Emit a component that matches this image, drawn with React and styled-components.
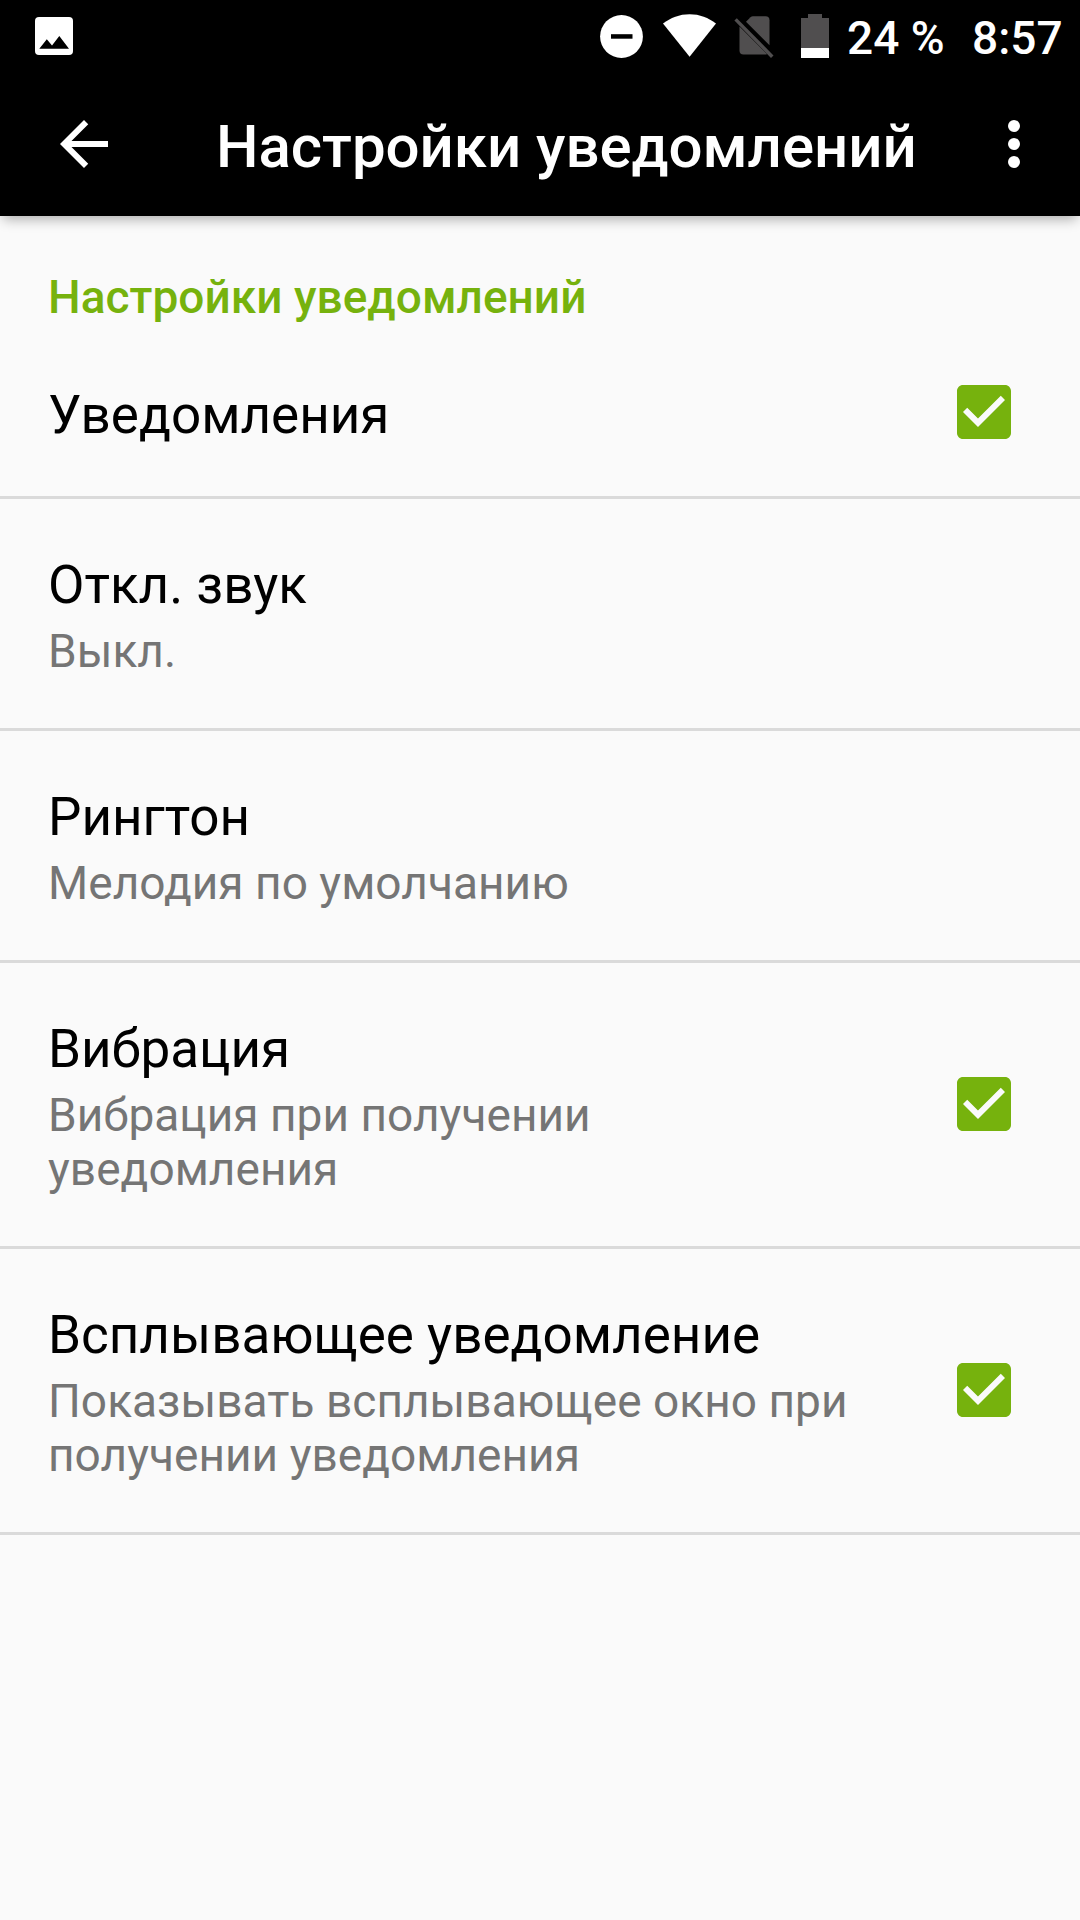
import React from "react";
import styled, { createGlobalStyle } from "styled-components";

const GlobalStyle = createGlobalStyle`
  body { margin: 0; background: #fafafa; }
  * { box-sizing: border-box; }
`;

const Screen = styled.div`
  width: 1080px;
  height: 1920px;
  display: flex;
  flex-direction: column;
  background: #fafafa;
  font-family: Roboto, "Noto Sans", sans-serif;
  overflow: hidden;
`;

const Header = styled.header`
  background: #000;
  color: #fff;
  box-shadow: 0 6px 12px -3px rgba(0, 0, 0, 0.32);
`;

const StatusBar = styled.div`
  height: 72px;
  display: flex;
  align-items: flex-start;
  justify-content: space-between;
  padding: 0 0 0 35px;
`;

const Glyph = styled.svg`
  display: block;
  flex: none;
  width: ${(p) => p.$w}px;
  height: ${(p) => p.$h}px;
  margin-top: ${(p) => p.$top || 0}px;
  margin-left: ${(p) => p.$left || 0}px;
`;

const StatusIcons = styled.div`
  width: 480px;
  display: flex;
  align-items: flex-start;
`;

const StatusText = styled.span`
  flex: none;
  font-size: 46px;
  line-height: 54px;
  font-weight: 500;
  margin-top: 11px;
  white-space: pre;
  margin-left: ${(p) => p.$left}px;
  width: ${(p) => p.$w}px;
`;

const Toolbar = styled.div`
  height: 144px;
  display: flex;
  align-items: center;
  padding: 0 30px 0 48px;
`;

const IconButton = styled.button`
  display: flex;
  flex: none;
  padding: 0;
  border: 0;
  background: none;
  color: inherit;
`;

const Title = styled.h1`
  flex: 1;
  margin: 5px 0 0 96px;
  font-size: 60px;
  line-height: 70px;
  font-weight: 500;
  letter-spacing: -0.04px;
  white-space: nowrap;
`;

const Category = styled.h2`
  margin: 54px 0 4px 48px;
  font-size: 46px;
  line-height: 54px;
  font-weight: 500;
  letter-spacing: 0.03px;
  color: #76b20d;
`;

const Row = styled.div`
  display: flex;
  align-items: center;
  justify-content: space-between;
  padding: 54px 60px 50px 48px;
  border-bottom: 3px solid #dadada;
  ${(p) => p.$first && "padding-top: 55px; padding-bottom: 49px; height: 171px;"}
`;

const Label = styled.div`
  font-size: 53px;
  line-height: 64px;
  color: #000;
`;

const Summary = styled.div`
  margin-top: 7px;
  font-size: 46px;
  line-height: 54px;
  letter-spacing: 0.04px;
  color: #757575;
  white-space: pre-line;
`;

const CheckGlyph = styled(Glyph)`
  margin-block: -11px -5px;
`;

function Check() {
  return (
    <CheckGlyph $w={72} $h={72} viewBox="0 0 24 24" fill="#76b20d" role="img">
      <path d="M19 3H5c-1.11 0-2 .9-2 2v14c0 1.1.89 2 2 2h14c1.11 0 2-.9 2-2V5c0-1.1-.89-2-2-2zm-9 14l-5-5 1.41-1.41L10 14.17l7.59-7.59L19 8l-9 9z" />
    </CheckGlyph>
  );
}

const settings = [
  { label: "Уведомления", checked: true },
  { label: "Откл. звук", summary: "Выкл." },
  { label: "Рингтон", summary: "Мелодия по умолчанию" },
  { label: "Вибрация", summary: "Вибрация при получении\nуведомления", checked: true },
  {
    label: "Всплывающее уведомление",
    summary: "Показывать всплывающее окно при\nполучении уведомления",
    checked: true,
  },
];

export default function App() {
  return (
    <Screen>
      <GlobalStyle />
      <Header>
        <StatusBar>
          <Glyph $w={38} $h={38} $top={17} viewBox="0 0 38 38">
            <rect width="38" height="38" rx="4" fill="#fff" />
            <path d="M4.3 31.8 11.8 22.3 17 28.6 24.3 19 34 31.8Z" fill="#000" />
          </Glyph>
          <StatusIcons>
            <Glyph $w={43} $h={43} $top={15} viewBox="0 0 43 43">
              <circle cx="21.5" cy="21.5" r="21.4" fill="#fff" />
              <rect x="11" y="19.2" width="21.5" height="4.5" fill="#000" />
            </Glyph>
            <Glyph $w={54} $h={43} $top={14} $left={20} viewBox="0 0 54 43">
              <path d="M0 9.6C7.5 3.6 16.6.2 26.6.2S45.5 3.6 53 9.6L26.6 42.8Z" fill="#fff" />
            </Glyph>
            <Glyph $w={40} $h={43} $top={16} $left={17} viewBox="0 0 40 43" fill="#504e4f">
              <path d="M12 5.8 16.5 1.3Q17.500.3 19 .3H31.5Q35.5.3 35.5 4.3V29.2Z" />
              <path d="M5.500 10.500 33 38Q32.300 38.500 31.500 38.500H9.500Q5.500 38.500 5.500 34.500Z" />
              <path d="M2.800 2.200.4 4.600 37 41.900 39.500 39.400Z" />
            </Glyph>
            <Glyph $w={28} $h={44} $top={14} $left={27} viewBox="0 0 28 44">
              <path d="M7 0H21V4H28V34H0V4H7Z" fill="#504e4f" />
              <path d="M0 34H28V44H0Z" fill="#fff" />
            </Glyph>
            <StatusText $left={18} $w={105}>24 %</StatusText>
            <StatusText $left={20} $w={92}>8:57</StatusText>
          </StatusIcons>
        </StatusBar>
        <Toolbar>
          <IconButton aria-label="Назад">
            <Glyph $w={72} $h={72} viewBox="0 0 24 24" fill="#fff">
              <path d="M20 11H7.83l5.59-5.59L12 4l-8 8 8 8 1.41-1.41L7.83 13H20v-2z" />
            </Glyph>
          </IconButton>
          <Title>Настройки уведомлений</Title>
          <IconButton aria-label="Ещё">
            <Glyph $w={72} $h={72} viewBox="0 0 24 24" fill="#fff">
              <circle cx="12" cy="6" r="2" />
              <circle cx="12" cy="12" r="2" />
              <circle cx="12" cy="18" r="2" />
            </Glyph>
          </IconButton>
        </Toolbar>
      </Header>
      <Category>Настройки уведомлений</Category>
      {settings.map((s, i) => (
        <Row key={s.label} $first={i === 0}>
          <div>
            <Label>{s.label}</Label>
            {s.summary && <Summary>{s.summary}</Summary>}
          </div>
          {s.checked && <Check />}
        </Row>
      ))}
    </Screen>
  );
}
